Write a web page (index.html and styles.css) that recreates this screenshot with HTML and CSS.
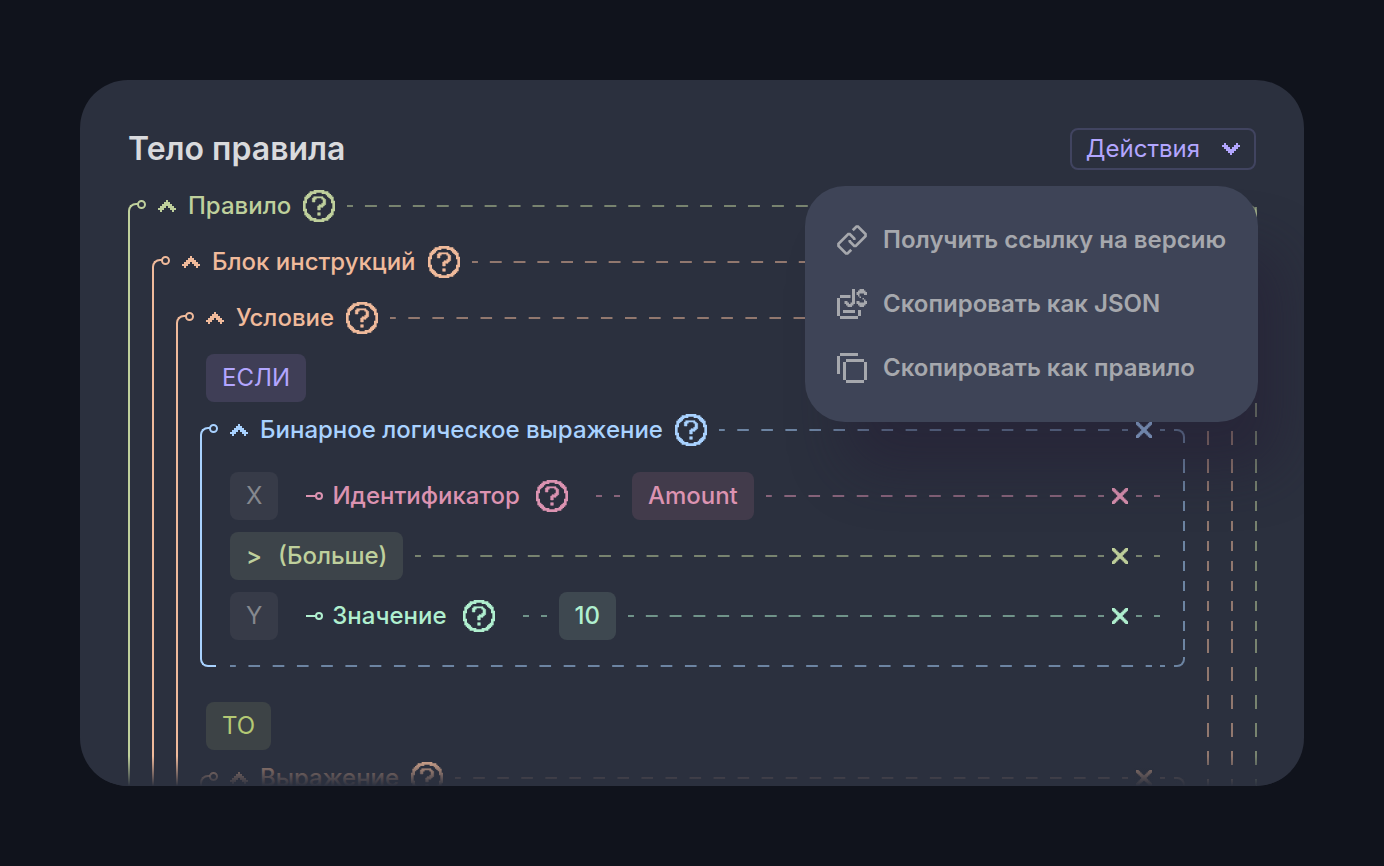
FILE: index.html
```html
<!DOCTYPE html>
<html lang="ru">
<head>
  <meta charset="UTF-8">
  <meta name="viewport" content="width=device-width, initial-scale=1.0">
  <title>Тело правила</title>
  <link rel="stylesheet" href="styles.css">
</head>
<body>
  <svg class="sprite" aria-hidden="true">
    <symbol id="i-caret" viewBox="0 0 9 6">
      <path d="M4 0h1v1h1v1h1v1h1v1h1v1h-1v1h-1v-1h-1v-1h-1v-1h-1v1h-1v1h-1v1h-1v-1h-1v-1h1v-1h1v-1h1v-1h1z"/>
    </symbol>
    <symbol id="i-down" viewBox="0 0 9 6">
      <path d="M4 6h1v-1h1v-1h1v-1h1v-1h1v-1h-1v-1h-1v1h-1v1h-1v1h-1v-1h-1v-1h-1v-1h-1v1h-1v1h1v1h1v1h1v1h1z"/>
    </symbol>
    <symbol id="i-help" viewBox="0 0 24 24">
      <path fill-rule="evenodd" d="M8 0h8v1h3v1h1v1h1v1h1v1h1v3h1v8h-1v3h-1v1h-1v1h-1v1h-1v1h-3v1h-8v-1h-3v-1h-1v-1h-1v-1h-1v-1h-1v-3h-1v-8h1v-3h1v-1h1v-1h1v-1h1v-1h3zM10 2v1h-3v1h-1v1h-1v1h-1v1h-1v3h-1v4h1v3h1v1h1v1h1v1h1v1h3v1h4v-1h3v-1h1v-1h1v-1h1v-1h1v-3h1v-4h-1v-3h-1v-1h-1v-1h-1v-1h-1v-1h-3v-1z"/>
      <path d="M9 5h6v1h1v1h1v4h-1v1h-1v1h-2v2h-2v-3h1v-1h2v-1h1v-3h-1v-1h-4v1h-1v2h-2v-3h1v-1h1zM11 17h2v2h-2z" stroke="currentColor" stroke-width=".4"/>
    </symbol>
    <symbol id="i-close" viewBox="0 0 12 12">
      <path d="M0 0h2v2h-2zm1 1h2v2h-2zm1 1h2v2h-2zm1 1h2v2h-2zm1 1h2v2h-2zm1 1h2v2h-2zm1 1h2v2h-2zm1 1h2v2h-2zm1 1h2v2h-2zm1 1h2v2h-2zm1 1h2v2h-2z" stroke="currentColor" stroke-width=".3"/>
      <path d="M10 0h2v2h-2zm-1 1h2v2h-2zm-1 1h2v2h-2zm-1 1h2v2h-2zm-1 1h2v2h-2zm-1 1h2v2h-2zm-1 1h2v2h-2zm-1 1h2v2h-2zm-1 1h2v2h-2zm-1 1h2v2h-2zm-1 1h2v2h-2z" stroke="currentColor" stroke-width=".3"/>
    </symbol>
    <symbol id="i-pin" viewBox="0 0 18 10">
      <path d="M0 5h10" fill="none" stroke="currentColor" stroke-width="2"/>
      <circle cx="13" cy="5" r="3" fill="none" stroke="currentColor" stroke-width="2"/>
    </symbol>
    <symbol id="i-link" viewBox="0 0 20 20">
      <path d="M10.500 3.500l2.500-2.500h1l5 5v1.500l-6.500 6.500h-1l-3-3v-1M9.500 16.500l-2.500 2.500h-1l-5-5v-1.500l6.500-6.500h1l3 3v1" fill="none" stroke="currentColor" stroke-width="1.800"/>
    </symbol>
    <symbol id="i-json" viewBox="0 0 20 20">
      <path d="M0 6h2v12h-2zM2 4h7v2h-7zM2 18h12v2h-12zM14 14h2v4h-2zM4 14h8v2h-8z"/>
      <path d="M10 0h2v10h-1v1h-1v1h-3v-1h-1v-1h-1v-2h2v1h1v1h1v-1h1z"/>
      <path d="M16 0h2v1h1v1h1v2h-2v-1h-3v2h1v1h2v1h1v1h1v2h-1v1h-1v1h-3v-1h-1v-1h-1v-2h2v1h3v-2h-1v-1h-2v-1h-1v-1h-1v-2h1v-1h1v-1h1z"/>
    </symbol>
    <symbol id="i-copy" viewBox="0 0 10 10">
      <path d="M1 0h6v1h-6zM0 1h1v6h-1zM3 2h6v1h-6zM2 3h1v6h-1zM9 3h1v6h-1zM3 9h6v1h-6z"/>
    </symbol>
  </svg>

  <main class="panel">
    <header class="panel-head">
      <h1>Тело правила</h1>
      <button class="actions" type="button" aria-expanded="true" aria-controls="menu">
        Действия
        <svg class="caret"><use href="#i-down"/></svg>
      </button>
      <div class="menu" id="menu">
        <button type="button"><svg><use href="#i-link"/></svg>Получить ссылку на версию</button>
        <button type="button"><svg><use href="#i-json"/></svg>Скопировать как JSON</button>
        <button type="button"><svg><use href="#i-copy"/></svg>Скопировать как правило</button>
      </div>
    </header>

    <section class="node green depth-1">
      <div class="node-head">
        <button class="icon" type="button" aria-label="Свернуть"><svg class="caret"><use href="#i-caret"/></svg></button>
        <h2>Правило</h2>
        <button class="icon" type="button" aria-label="Справка"><svg class="help"><use href="#i-help"/></svg></button>
        <span class="dashes"></span>
      </div>

      <section class="node orange depth-2">
        <div class="node-head">
          <button class="icon" type="button" aria-label="Свернуть"><svg class="caret"><use href="#i-caret"/></svg></button>
          <h2>Блок инструкций</h2>
          <button class="icon" type="button" aria-label="Справка"><svg class="help"><use href="#i-help"/></svg></button>
          <span class="dashes"></span>
        </div>

        <section class="node orange depth-3">
          <div class="node-head">
            <button class="icon" type="button" aria-label="Свернуть"><svg class="caret"><use href="#i-caret"/></svg></button>
            <h2>Условие</h2>
            <button class="icon" type="button" aria-label="Справка"><svg class="help"><use href="#i-help"/></svg></button>
            <span class="dashes"></span>
          </div>

          <span class="chip keyword violet">ЕСЛИ</span>

          <section class="node closed blue depth-4">
            <div class="node-head">
              <button class="icon" type="button" aria-label="Свернуть"><svg class="caret"><use href="#i-caret"/></svg></button>
              <h2>Бинарное логическое выражение</h2>
              <button class="icon" type="button" aria-label="Справка"><svg class="help"><use href="#i-help"/></svg></button>
              <span class="dashes"></span>
              <button class="icon remove" type="button" aria-label="Удалить"><svg class="close"><use href="#i-close"/></svg></button>
              <span class="dashes stub"></span>
            </div>

            <div class="rows">
              <div class="row pink">
                <span class="chip muted">X</span>
                <span class="arg"><svg class="pin"><use href="#i-pin"/></svg>Идентификатор</span>
                <button class="icon" type="button" aria-label="Справка"><svg class="help"><use href="#i-help"/></svg></button>
                <span class="dashes short lead"></span>
                <button class="chip" type="button">Amount</button>
                <span class="dashes"></span>
                <button class="icon remove" type="button" aria-label="Удалить"><svg class="close"><use href="#i-close"/></svg></button>
                <span class="dashes short"></span>
              </div>
              <div class="row green">
                <button class="chip operator" type="button"><span>&gt;</span><span>(Больше)</span></button>
                <span class="dashes"></span>
                <button class="icon remove" type="button" aria-label="Удалить"><svg class="close"><use href="#i-close"/></svg></button>
                <span class="dashes short"></span>
              </div>
              <div class="row mint">
                <span class="chip muted">Y</span>
                <span class="arg"><svg class="pin"><use href="#i-pin"/></svg>Значение</span>
                <button class="icon" type="button" aria-label="Справка"><svg class="help"><use href="#i-help"/></svg></button>
                <span class="dashes short lead"></span>
                <button class="chip" type="button">10</button>
                <span class="dashes"></span>
                <button class="icon remove" type="button" aria-label="Удалить"><svg class="close"><use href="#i-close"/></svg></button>
                <span class="dashes short"></span>
              </div>
            </div>

            <div class="node-foot">
              <span class="dashes"></span>
              <span class="dashes stub"></span>
            </div>
          </section>

          <span class="chip keyword lime">ТО</span>

          <section class="node orange depth-4 next">
            <div class="node-head">
              <button class="icon" type="button" aria-label="Свернуть"><svg class="caret"><use href="#i-caret"/></svg></button>
              <h2>Выражение</h2>
              <button class="icon" type="button" aria-label="Справка"><svg class="help"><use href="#i-help"/></svg></button>
              <span class="dashes"></span>
              <button class="icon remove" type="button" aria-label="Удалить"><svg class="close"><use href="#i-close"/></svg></button>
              <span class="dashes stub"></span>
            </div>
          </section>
        </section>
      </section>
    </section>
  </main>
</body>
</html>
```

FILE: styles.css
```css
*,
*::before,
*::after {
  margin: 0;
  padding: 0;
  box-sizing: border-box;
}

body {
  height: 100vh;
  padding: 80px;
  display: flex;
  overflow: hidden;
  background: #10131c;
  font-family: Inter, sans-serif;
  font-size: 24px;
  line-height: 32px;
}

button {
  font: inherit;
  color: inherit;
  background: none;
  border: none;
  cursor: pointer;
}

svg {
  display: block;
  flex: none;
  fill: currentColor;
}

.sprite {
  position: absolute;
  width: 0;
  height: 0;
}

.panel {
  flex: 1;
  min-width: 0;
  position: relative;
  overflow: hidden;
  padding: 48px 47px 0 48px;
  border-radius: 48px;
  background: #2b303e;
}

/* fade at the bottom edge */
.panel::after {
  content: "";
  position: absolute;
  left: 0;
  right: 0;
  bottom: 0;
  height: 30px;
  background: linear-gradient(rgba(43, 48, 62, 0), #2b303e);
}

.panel-head {
  position: relative;
  z-index: 2;
  display: flex;
  justify-content: space-between;
  align-items: center;
  margin-bottom: 16px;
  padding-right: 1px;
}

h1 {
  font-size: 32px;
  font-weight: 600;
  color: #d9dadd;
}

h2 {
  font-size: 24px;
  font-weight: 500;
  white-space: nowrap;
}

.actions {
  display: flex;
  align-items: center;
  gap: 22px;
  height: 42px;
  padding: 0 14px;
  border: 2px solid #414460;
  border-radius: 8px;
  color: #b3a6ff;
}

.caret {
  width: 18px;
  height: 12px;
}

.help {
  width: 32px;
  height: 32px;
}

.close {
  width: 16px;
  height: 16px;
}

.pin {
  width: 18px;
  height: 10px;
}

.menu {
  position: absolute;
  top: 58px;
  right: -1px;
  padding: 22px 32px;
  border-radius: 40px;
  background: #3e4457;
  box-shadow: 32px 56px 56px -8px rgba(36, 26, 50, 0.45);
}

.menu button {
  display: flex;
  align-items: center;
  gap: 16px;
  height: 64px;
  font-weight: 600;
  white-space: nowrap;
  color: #a6a8ad;
}

.menu svg {
  width: 30px;
  height: 30px;
}

/* rule tree */
.green { --c: #bfd09c; --chip: #3d444a; }
.orange { --c: #f0ba9b; }
.blue { --c: #a9d2ff; }
.pink { --c: #dc93b1; --chip: #423b4b; }
.mint { --c: #b0efcf; --chip: #3e4850; }
.violet { --c: #b3a6ff; --chip: #3f3e56; }
.lime { --c: #b4c974; --chip: #3d4346; }

.green, .orange, .blue, .pink, .mint {
  --line: color-mix(in srgb, var(--c) 52%, transparent);
}

.node {
  position: relative;
  padding: 0 24px;
}

.node::before {
  content: "";
  position: absolute;
  top: 17px;
  left: 0;
  bottom: 0;
  width: 10px;
  border: solid var(--c);
  border-width: 2px 0 0 2px;
  border-top-left-radius: 8px;
}

/* right rail: dashes get denser beside the argument rows */
.node::after {
  content: "";
  position: absolute;
  top: 20px;
  right: 0;
  bottom: 0;
  width: 2px;
  background:
    repeating-linear-gradient(var(--line) 0 14px, transparent 14px 28px) 0 1px / 2px calc(var(--tight) - 8px) no-repeat,
    repeating-linear-gradient(var(--line) 0 10px, transparent 10px 20px) 0 var(--tight) / 2px 150px no-repeat,
    repeating-linear-gradient(var(--line) 0 14px, transparent 14px 28px) 0 calc(var(--tight) + 158px) / 2px 100vh no-repeat;
}

.depth-1 { --tight: 275px; }
.depth-2 { --tight: 219px; }
.depth-3 { --tight: 163px; }

.node > .node {
  margin-top: 16px;
}

.node > .chip + .node {
  margin-top: 8px;
}

.node-head,
.row,
.arg {
  display: flex;
  align-items: center;
  gap: 12px;
  color: var(--c);
}

.node-head {
  position: relative;
  height: 40px;
  padding-left: 6px;
}

/* ring at the end of the bracket */
.node-head::before {
  content: "";
  position: absolute;
  left: -15px;
  top: 14px;
  width: 9px;
  height: 9px;
  border: 2px solid var(--c);
  border-radius: 50%;
}

/* top right corner of the bracket */
.node-head::after {
  content: "";
  position: absolute;
  right: -24px;
  top: 19px;
  width: 11px;
  height: 14px;
  border: solid var(--line);
  border-width: 2px 2px 0 0;
  border-top-right-radius: 8px;
}

.depth-4 {
  padding-right: 25px;
}

.depth-4 > .node-head::after {
  right: -25px;
}

.depth-4::after {
  top: 49px;
  background-position: 0 0, 0 22px, 0 180px;
  background-size: 2px 14px, 2px 150px, 2px 11px;
}

.dashes {
  flex: 1;
  height: 2px;
  background: linear-gradient(to right, var(--line) 25%, transparent 25% 75%, var(--line) 75%) 0 0 / 24px 2px round;
}

.dashes.short {
  flex: none;
  width: 24px;
}

.dashes.stub {
  flex: none;
  width: 5px;
  margin-right: -5px;
  background: var(--line);
}

.remove {
  margin: 0 -4px;
}

.rows {
  display: flex;
  flex-direction: column;
  gap: 12px;
  margin-top: 22px;
  padding-left: 6px;
  font-weight: 500;
}

.arg {
  margin-left: 16px;
  gap: 8px;
}

.arg + .icon {
  margin-left: 4px;
}

.lead {
  margin-left: 16px;
}

.chip {
  display: block;
  height: 48px;
  padding: 0 16px;
  border-radius: 8px;
  line-height: 48px;
  color: var(--c);
  background: var(--chip);
}

.keyword {
  width: fit-content;
  margin: 16px 0 0 6px;
}

.muted {
  font-weight: 400;
  color: #85888e;
  background: #373b48;
}

.operator {
  display: flex;
  gap: 16px;
}

.node-foot {
  position: relative;
  display: flex;
  align-items: flex-end;
  gap: 8px;
  height: 27px;
  margin-bottom: 35px;
  padding-left: 6px;
}

.closed::before {
  border-bottom-width: 2px;
  border-bottom-left-radius: 8px;
}

.node-foot::before {
  content: "";
  position: absolute;
  left: -14px;
  bottom: 0;
  width: 6px;
  height: 2px;
  background: var(--c);
}

.node-foot::after {
  content: "";
  position: absolute;
  right: -25px;
  bottom: 0;
  width: 11px;
  height: 10px;
  border: solid var(--line);
  border-width: 0 2px 2px 0;
  border-bottom-right-radius: 8px;
}

.next::before,
.next .node-head::before,
.next h2,
.next .caret,
.next .close,
.next .dashes,
.next .node-head::after {
  opacity: 0.7;
}
```
